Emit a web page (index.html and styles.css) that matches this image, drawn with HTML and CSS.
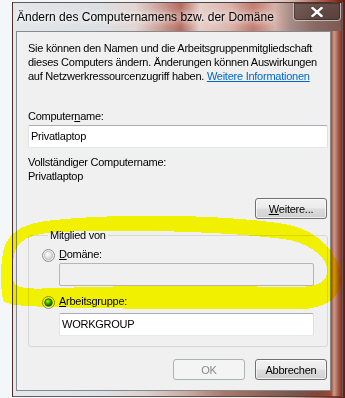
FILE: index.html
```html
<!DOCTYPE html>
<html lang="de">
<head>
<meta charset="utf-8">
<title>Ändern des Computernamens bzw. der Domäne</title>
<link rel="stylesheet" href="styles.css">
</head>
<body>
<div class="window">
  <div class="titlebar">
    <span class="title">Ändern des Computernamens bzw. der Domäne</span>
    <div class="close">
      <svg width="12" height="10" viewBox="0 0 12 10">
        <path d="M1.5 1 L10.5 9 M10.5 1 L1.5 9" stroke="#3a3030" stroke-opacity=".6" stroke-width="4.2" stroke-linecap="round"/>
        <path d="M1.5 1 L10.5 9 M10.5 1 L1.5 9" stroke="#ffffff" stroke-width="2.4" stroke-linecap="square"/>
      </svg>
    </div>
  </div>
  <div class="client">
    <p class="intro">Sie können den Namen und die Arbeitsgruppenmitgliedschaft<br>dieses Computers ändern. Änderungen können Auswirkungen<br>auf Netzwerkressourcenzugriff haben. <a class="link" href="#">Weitere Informationen</a></p>
    <div class="label label-computer">Computer<u>n</u>ame:</div>
    <div class="field field-wide">Privatlaptop</div>
    <div class="label label-full">Vollständiger Computername:</div>
    <div class="label">Privatlaptop</div>
    <div class="row-right">
      <button class="btn" type="button"><u>W</u>eitere...</button>
    </div>
    <fieldset class="group">
      <legend class="group-title">Mitglied von</legend>
      <div class="radio-row">
        <svg class="radio" width="13" height="13" viewBox="0 0 13 13">
          <defs>
            <radialGradient id="rOff" cx="40%" cy="35%" r="70%">
              <stop offset="0" stop-color="#ffffff"/>
              <stop offset="1" stop-color="#c9c9c9"/>
            </radialGradient>
          </defs>
          <circle cx="6.5" cy="6.5" r="6" fill="#f3f3f3" stroke="#8e8f8f"/>
          <circle cx="6.5" cy="6.5" r="4.2" fill="url(#rOff)" stroke="#b9b9b9" stroke-width=".7"/>
        </svg>
        <span><u>D</u>omäne:</span>
      </div>
      <div class="field field-group disabled"></div>
      <div class="radio-row radio-row-2">
        <svg class="radio" width="13" height="13" viewBox="0 0 13 13">
          <defs>
            <radialGradient id="rOn" cx="40%" cy="35%" r="65%">
              <stop offset="0" stop-color="#b8ff90"/>
              <stop offset=".45" stop-color="#3fb02a"/>
              <stop offset="1" stop-color="#0c4d0a"/>
            </radialGradient>
          </defs>
          <circle cx="6.5" cy="6.5" r="6" fill="#f3f3f3" stroke="#8e8f8f"/>
          <circle cx="6.5" cy="6.5" r="3.8" fill="url(#rOn)" stroke="#1f5a1a" stroke-width=".8"/>
        </svg>
        <span><u>A</u>rbeitsgruppe:</span>
      </div>
      <div class="field field-group">WORKGROUP</div>
    </fieldset>
    <div class="actions">
      <button class="btn" type="button" disabled>OK</button>
      <button class="btn" type="button">Abbrechen</button>
    </div>
  </div>
</div>
<svg class="marker" width="345" height="398" viewBox="0 0 345 398">
  <path fill="#ffff00" fill-rule="evenodd" shape-rendering="crispEdges"
    d="M3 300 C0 285, 0 255, 6 243 C12 230, 25 224, 45 221 C110 213, 220 214, 285 224 C320 230, 340 255, 341 278 C342 298, 325 309, 300 309 C230 310, 120 309, 50 307 C20 306, 5 305, 3 300 Z
       M13 280 C12 262, 13 250, 20 243 C27 236, 40 233, 60 232 C120 229, 230 231, 290 240 C312 245, 326 258, 327 268 C328 280, 322 286, 300 287 C220 286, 130 285, 60 288 C30 289, 14 290, 13 280 Z"/>
</svg>
</body>
</html>
```

FILE: styles.css
```css
* { box-sizing: border-box; }

html, body {
  margin: 0;
  padding: 0;
}

body {
  position: relative;
  width: 345px;
  height: 398px;
  overflow: hidden;
  font-family: "Liberation Sans", Arial, sans-serif;
  background: linear-gradient(90deg, #f4f7f9 0px, #eef1f4 240px, #d7bcb4 290px, #9a4330 330px, #6a1a0c 345px);
}

.window {
  margin: 2px 0 0 12px;
  width: 331px;
  height: 395px;
  border: 1px solid rgba(55, 40, 40, 0.75);
  border-bottom-color: rgba(70, 60, 60, 0.8);
  background:
    linear-gradient(90deg, rgba(255,255,255,0) 0px, rgba(255,255,255,0) 318px, rgba(255,225,215,0.55) 321px, rgba(255,225,215,0.2) 325px, rgba(0,0,0,0) 328px),
    linear-gradient(90deg, #e4e8eb 0px, #dfe2e4 90px, #ddd2cf 130px, #c9aaa1 175px, #a97a6c 210px, #8f6356 250px, #7b564e 280px, #83443a 305px, #9b4a34 318px, #8a3525 329px);
}

.titlebar {
  display: flex;
  align-items: flex-start;
  height: 28px;
  padding-left: 4px;
  background: linear-gradient(90deg,
    #e3e7ea 0px, #dcdfe1 87px, #e2d6d3 122px, #c99890 150px, #b56a5e 168px,
    #e6cec8 187px, #dcb6ad 215px, #c37a6d 240px, #d6b0a8 262px, #a88e88 277px,
    #8a6c65 300px, #7d5a52 327px, #8d3c2c 329px);
}

.title {
  font-size: 12px;
  line-height: 14px;
  padding-top: 7px;
  color: #000;
  white-space: nowrap;
  text-shadow: 0 0 5px rgba(255,255,255,0.95), 0 0 9px rgba(255,255,255,0.9), 0 0 12px rgba(255,255,255,0.7);
}

.close {
  margin-left: auto;
  margin-right: 1px;
  width: 48px;
  height: 18px;
  display: flex;
  align-items: center;
  justify-content: center;
  border: 1px solid rgba(255, 255, 255, 0.6);
  border-top: none;
  border-radius: 0 0 4px 4px;
  background: linear-gradient(180deg, rgba(80, 60, 58, 0.55), rgba(60, 40, 36, 0.55));
  box-shadow: inset 0 0 0 1px rgba(30, 20, 20, 0.4);
}

.client {
  margin-left: 3px;
  width: 315px;
  height: 360px;
  border: 1px solid #858a90;
  background: #f0f0f0;
  padding: 9px 2px 0 11px;
  font-size: 11px;
  letter-spacing: -0.25px;
  line-height: 14px;
  color: #000;
}

.intro {
  margin: 0;
  white-space: nowrap;
}

.link {
  color: #0066cc;
  text-decoration: underline;
}

.label {
  white-space: nowrap;
}

.label-computer { margin-top: 26px; }
.label-full { margin-top: 7px; }

.field {
  height: 23px;
  border: 1px solid;
  border-color: #abadb3 #dbdfe6 #e3e9ef #e2e3ea;
  border-radius: 2px;
  background: #fff;
  padding: 3px 0 0 2px;
  line-height: 14px;
  white-space: nowrap;
}

.field-wide {
  margin-top: 2px;
  width: 300px;
}

.field-group {
  margin-left: 17px;
  width: 255px;
  margin-top: 4px;
}

.field.disabled {
  margin-top: 1px;
  background: #f0f0f0;
  border-color: #b5b5b5;
}

.row-right {
  display: flex;
  justify-content: flex-end;
  margin-top: 15px;
  padding-right: 1px;
  width: 300px;
}

.btn {
  width: 72px;
  height: 21px;
  padding: 2px 0 0;
  border: 1px solid #707070;
  border-radius: 3px;
  background: linear-gradient(180deg, #f2f2f2 0%, #ebebeb 48%, #dddddd 52%, #cfcfcf 100%);
  box-shadow: inset 0 0 0 1px rgba(255, 255, 255, 0.65);
  font-family: "Liberation Sans", Arial, sans-serif;
  font-size: 11px;
  letter-spacing: -0.25px;
  line-height: 17px;
  color: #000;
  display: flex;
  justify-content: center;
  align-items: flex-start;
}

.btn:disabled {
  border-color: #adb2b5;
  background: #f4f4f4;
  box-shadow: none;
  color: #8a8a8a;
}

.group {
  margin: 9px 0 0;
  width: 300px;
  border: 1px solid #d5d9dc;
  border-radius: 3px;
  padding: 4px 0 10px 13px;
  min-width: 0;
}

.group-title {
  margin-left: 6px;
  padding: 0 2px;
  line-height: 15px;
}

.radio-row {
  display: flex;
  align-items: flex-start;
  gap: 4px;
  white-space: nowrap;
}

.radio {
  display: block;
  flex: none;
  margin-top: 2px;
}

.radio-row-2 { margin-top: 8px; }

.actions {
  display: flex;
  justify-content: flex-end;
  gap: 10px;
  margin-top: 12px;
  width: 300px;
  padding-right: 1px;
}

.marker {
  position: absolute;
  left: 0;
  top: 0;
  pointer-events: none;
  mix-blend-mode: multiply;
}
```
